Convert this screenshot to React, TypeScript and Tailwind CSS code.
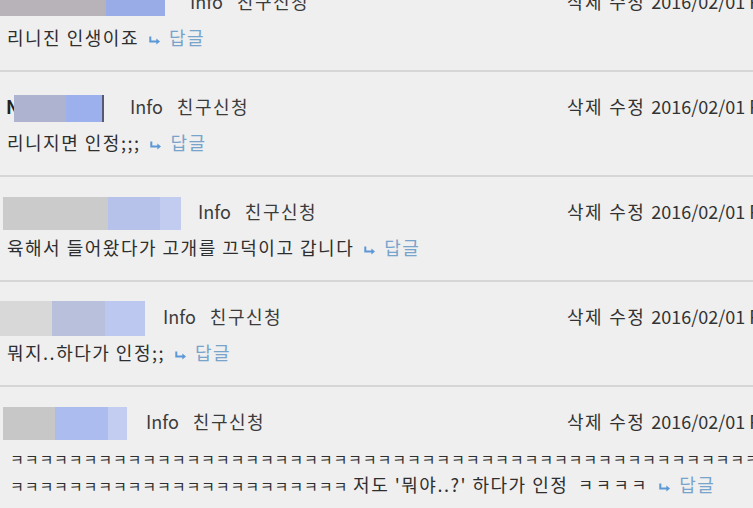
import React from "react";

type Seg = { w: number; c: string };

type Comment = {
  lead: number;
  prefix?: string;
  segs: Seg[];
  blockH: number;
  blockTop?: boolean;
  infoGap: number;
  body: React.ReactNode[];
};

const FONT = { fontFamily: '"Noto Sans CJK KR", "Noto Sans", sans-serif' };

function ReplyIcon() {
  return (
    <svg width="12" height="9" viewBox="0 0 12 9" className="mt-[5px]">
      <path d="M1.3 0.5 V5.6 H8.5" fill="none" stroke="#5c97d6" strokeWidth="2" />
      <path d="M7.4 2.6 L11 5.6 L7.4 8.6 Z" fill="#5c97d6" />
    </svg>
  );
}

function Reply() {
  return (
    <span className="ml-[10px] inline-flex items-center">
      <ReplyIcon />
      <span className="ml-[8px] text-[#78a3cb]">답글</span>
    </span>
  );
}

// ㅋ runs are set smaller and spaced out, like the bitmap font in the shot
const KK = (n: number) => (
  <span className="text-[15px] tracking-[0.9px]">{"ㅋ".repeat(n)}</span>
);

const comments: Comment[] = [
  {
    lead: 0,
    segs: [
      { w: 106, c: "#b8b3b8" },
      { w: 59, c: "#9aace8" },
    ],
    blockH: 25,
    blockTop: true,
    infoGap: 25,
    body: [
      <>
        리니진 인생이죠
        <Reply />
      </>,
    ],
  },
  {
    lead: 6,
    prefix: "N",
    segs: [
      { w: 52, c: "#aeb3cf" },
      { w: 36, c: "#9db0ee" },
      { w: 2, c: "#555a70" },
    ],
    blockH: 27,
    infoGap: 26,
    body: [
      <>
        리니지면 인정;;;
        <Reply />
      </>,
    ],
  },
  {
    lead: 3,
    segs: [
      { w: 105, c: "#cccbcc" },
      { w: 52, c: "#b6c2ea" },
      { w: 21, c: "#c2ccf0" },
    ],
    blockH: 33,
    infoGap: 17,
    body: [
      <>
        육해서 들어왔다가 고개를 끄덕이고 갑니다
        <Reply />
      </>,
    ],
  },
  {
    lead: 0,
    segs: [
      { w: 52, c: "#d9d8d9" },
      { w: 53, c: "#b9c0dc" },
      { w: 40, c: "#bcc8ef" },
    ],
    blockH: 35,
    infoGap: 18,
    body: [
      <>
        뭐지..하다가 인정;;
        <Reply />
      </>,
    ],
  },
  {
    lead: 3,
    segs: [
      { w: 52, c: "#c8c7c8" },
      { w: 53, c: "#adbcee" },
      { w: 19, c: "#c3cdf2" },
    ],
    blockH: 33,
    infoGap: 19,
    body: [
      <>
        <span className="ml-[3px]">{KK(52)}</span>
      </>,
      <>
        <span className="ml-[3px]">{KK(23)}</span>
        <span className="ml-[5px]">저도 '뭐야..?' 하다가 인정</span>
        <span className="ml-[10px] text-[16px] tracking-[3px]">ㅋㅋㅋㅋ</span>
        <Reply />
      </>,
    ],
  },
];

function CommentRow({ c }: { c: Comment }) {
  return (
    <div className="border-b-2 border-[#d6d6d6] pt-[20px] pb-[19px]">
      <div className="flex h-[33px] items-center">
        <div
          className="flex shrink-0 items-center"
          style={{ marginLeft: c.lead }}
        >
          {c.prefix && (
            <span className="mb-[4px] w-[8px] overflow-hidden font-bold text-[#222]">
              {c.prefix}
            </span>
          )}
          <div
            className={`flex ${c.blockTop ? "self-start" : ""}`}
            style={{ height: c.blockH }}
          >
            {c.segs.map((s, i) => (
              <div key={i} style={{ width: s.w, background: s.c }} />
            ))}
          </div>
        </div>
        <div
          className="mb-[4px] flex items-center text-[#3b3b3b]"
          style={{ marginLeft: c.infoGap }}
        >
          <span className="tracking-normal">Info</span>
          <span className="ml-[14px]">친구신청</span>
        </div>
        <div className="mb-[4px] ml-auto flex w-[186px] shrink-0 overflow-hidden whitespace-nowrap text-[#333]">
          <span>삭제</span>
          <span className="ml-[6px]">수정</span>
          <span className="ml-[6px] tracking-normal">2016/02/01 PM 12:34</span>
        </div>
      </div>
      <div className="mt-[4px] pl-[7px] text-[#2e2e2e]">
        {c.body.map((line, i) => (
          <div
            key={i}
            className="flex h-[27px] items-center overflow-hidden whitespace-nowrap leading-[27px]"
          >
            {line}
          </div>
        ))}
      </div>
    </div>
  );
}

export default function App() {
  return (
    <div
      className="h-[508px] w-[753px] overflow-hidden bg-[#efefef] text-[18px] tracking-[1.5px]"
      style={FONT}
    >
      <div className="-mt-[33px]">
        {comments.map((c, i) => (
          <CommentRow key={i} c={c} />
        ))}
      </div>
    </div>
  );
}
